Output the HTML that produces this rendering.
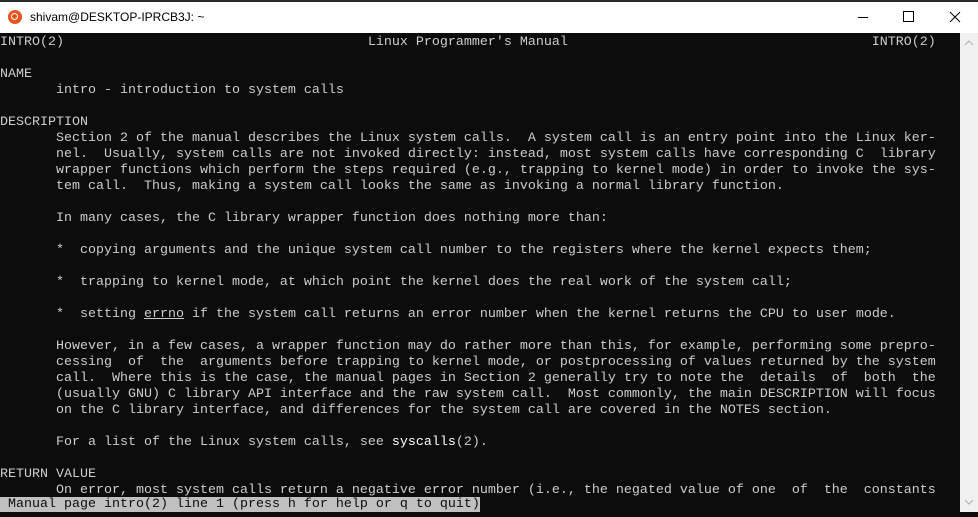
<!DOCTYPE html>
<html><head><meta charset="utf-8"><style>
html,body{margin:0;padding:0;width:978px;height:512px;overflow:hidden;background:#0c0c0c}
#top{position:absolute;left:0;top:0;width:978px;height:2px;background:#2b2b2b}
#title{position:absolute;left:0;top:2px;width:978px;height:31px;background:#fff;font-family:"Liberation Sans",sans-serif;font-size:12px;color:#000}
#title .t{position:absolute;left:30px;top:8px}
#logo{position:absolute;left:8px;top:8px;width:14px;height:14px;border-radius:50%;background:#e95420}
#logo:after{content:"";position:absolute;left:3px;top:3px;width:5px;height:5px;border:1.5px solid #fff;border-radius:50%}
.ctl{position:absolute;top:0;width:46px;height:31px}
#term{position:absolute;left:0;top:35px;width:960px;height:461px;background:#0c0c0c;overflow:hidden}
pre{margin:0;font-family:"Liberation Mono",monospace;font-size:13.33px;line-height:16px;color:#cccccc;white-space:pre}
b{color:#fff;font-weight:normal}
u{text-decoration:underline}
#status{position:absolute;left:0;top:497px;height:15px;line-height:15px;background:#c0c0c0;color:#0c0c0c}
#sb{position:absolute;left:960px;top:33px;width:18px;height:479px;background:#f0f0f0}
</style></head><body>
<div id="top"></div>
<div id="title"><div id="logo"></div><span class="t">shivam@DESKTOP-IPRCB3J: ~</span>
<svg class="ctl" style="left:840px" width="46" height="31"><line x1="18" y1="15.5" x2="28" y2="15.5" stroke="#000" stroke-width="1"/></svg>
<svg class="ctl" style="left:886px" width="46" height="31"><rect x="17.5" y="9.5" width="10" height="10" fill="none" stroke="#000"/></svg>
<svg class="ctl" style="left:932px" width="46" height="31"><path d="M18 10 L28 20 M28 10 L18 20" stroke="#000" stroke-width="1"/></svg>
</div>
<div id="term"><pre>INTRO(2)                                      Linux Programmer's Manual                                      INTRO(2)

NAME
       intro - introduction to system calls

DESCRIPTION
       Section 2 of the manual describes the Linux system calls.  A system call is an entry point into the Linux ker-
       nel.  Usually, system calls are not invoked directly: instead, most system calls have corresponding C  library
       wrapper functions which perform the steps required (e.g., trapping to kernel mode) in order to invoke the sys-
       tem call.  Thus, making a system call looks the same as invoking a normal library function.

       In many cases, the C library wrapper function does nothing more than:

       *  copying arguments and the unique system call number to the registers where the kernel expects them;

       *  trapping to kernel mode, at which point the kernel does the real work of the system call;

       *  setting <u>errno</u> if the system call returns an error number when the kernel returns the CPU to user mode.

       However, in a few cases, a wrapper function may do rather more than this, for example, performing some prepro-
       cessing  of  the  arguments before trapping to kernel mode, or postprocessing of values returned by the system
       call.  Where this is the case, the manual pages in Section 2 generally try to note the  details  of  both  the
       (usually GNU) C library API interface and the raw system call.  Most commonly, the main DESCRIPTION will focus
       on the C library interface, and differences for the system call are covered in the NOTES section.

       For a list of the Linux system calls, see <b>syscalls</b>(2).

RETURN VALUE
       On error, most system calls return a negative error number (i.e., the negated value of one  of  the  constants
</pre></div>
<pre id="status"> Manual page intro(2) line 1 (press h for help or q to quit)</pre>
<div id="sb"><svg width="18" height="479"><path d="M5 12 L9 8 L13 12" fill="none" stroke="#b0b0b0"/><path d="M5 467 L9 471 L13 467" fill="none" stroke="#b0b0b0"/></svg></div>
</body></html>
